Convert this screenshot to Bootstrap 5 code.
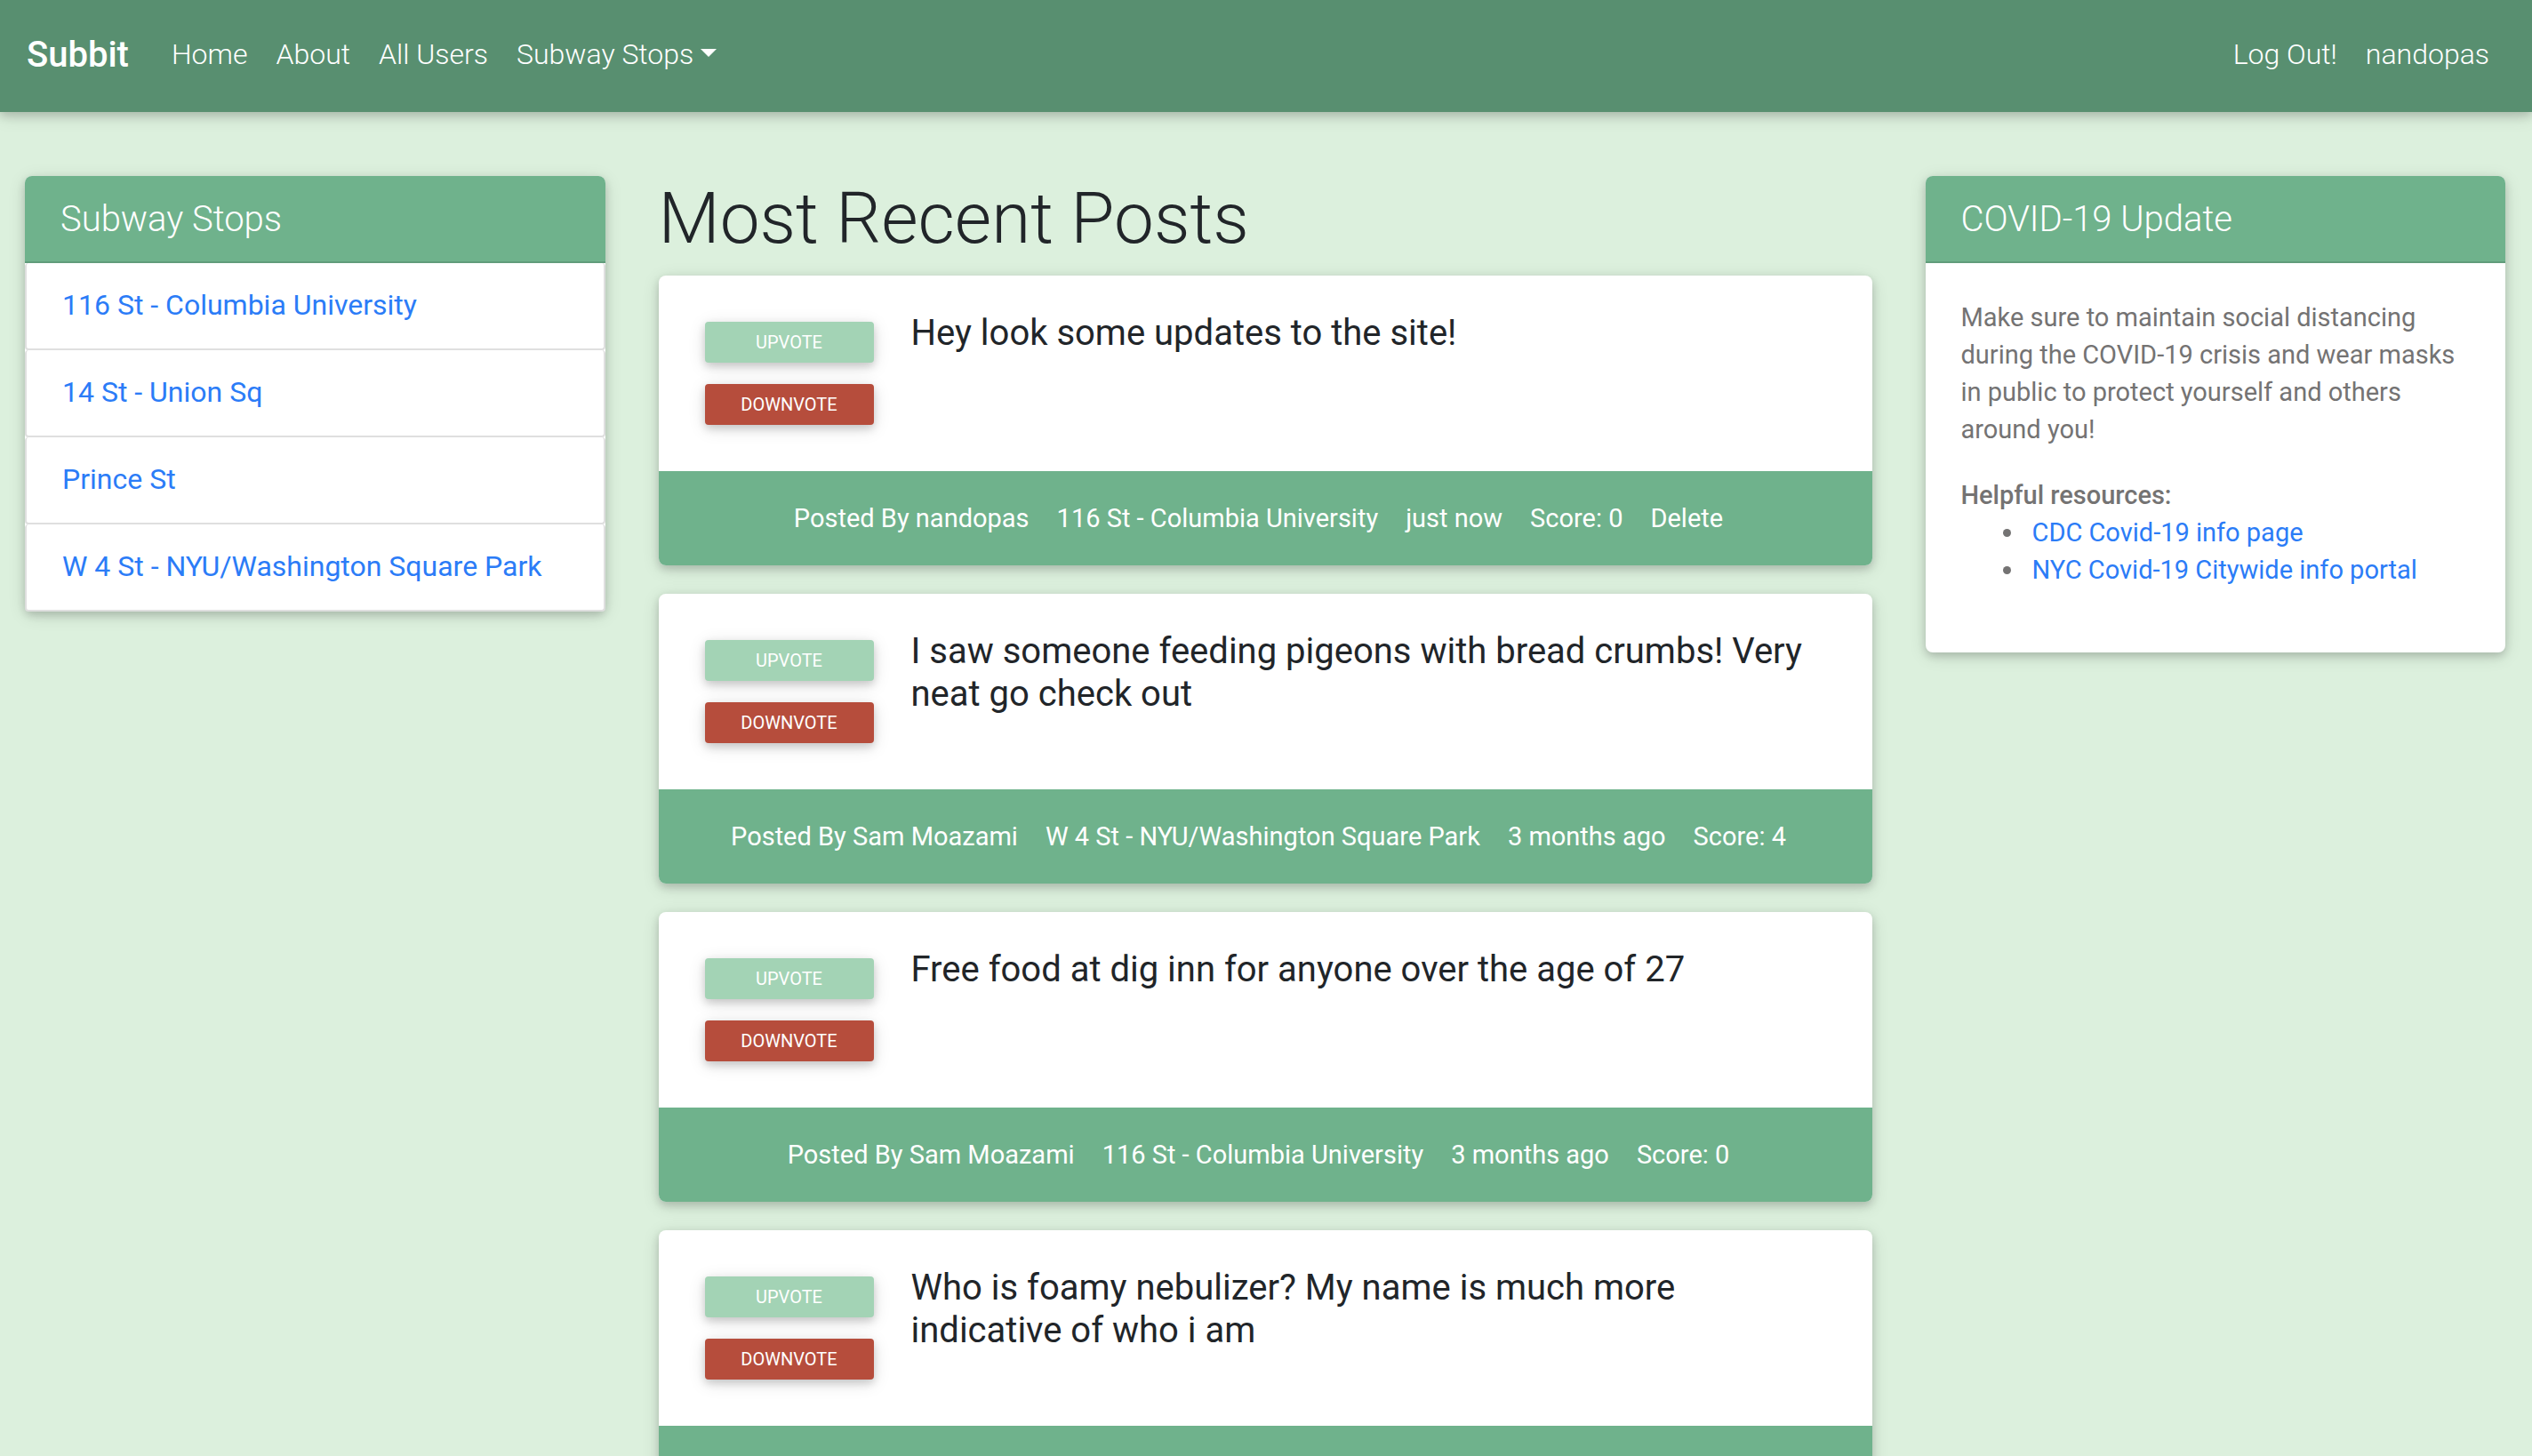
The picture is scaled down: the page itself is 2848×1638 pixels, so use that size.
<!DOCTYPE html>
<html lang="en">
<head>
<meta charset="utf-8">
<meta name="viewport" content="width=device-width, initial-scale=1">
<title>Subbit</title>
<link rel="stylesheet" href="https://cdn.jsdelivr.net/npm/bootstrap@5.3.0/dist/css/bootstrap.min.css">
<style>
  :root { --raise: 0 4px 10px rgba(0,0,0,.16), 0 4px 20px rgba(0,0,0,.12); }
  body { background: #dcf0dd; color: #212529; font-family: Roboto, "Liberation Sans", sans-serif; font-size: 32px; line-height: 48px; }
  a { color: #2b7cf7; text-decoration: none; }

  .site-nav { --bs-navbar-nav-link-padding-x: 16px; background: #588f70; box-shadow: var(--raise); font-weight: 300; padding: 21px 32px 25px 30px; }
  .site-nav .navbar-brand { color: #fff; font-size: 40px; line-height: 60px; font-weight: 500; margin-right: 32px; padding: 11px 0 9px; }
  .site-nav .nav-link { color: #fff; font-size: 32px; line-height: 48px; padding-top: 16px; padding-bottom: 16px; }

  .page-wrap { padding: 72px 30px 0 28px; }
  .page-wrap > .row { --bs-gutter-x: 60px; }

  .panel { --bs-card-border-width: 0; --bs-card-border-radius: 8px; --bs-card-inner-border-radius: 8px; box-shadow: var(--raise); }
  .panel .card-header { background: #6fb28c; color: #fff; border-bottom: 2px solid #619c7b; padding: 25px 40px 23px; }
  .panel .card-header h2 { font-size: 40px; line-height: 48px; font-weight: 300; margin: 0; }
  .panel .card-body { padding: 40px; }

  .stop-list .list-group-item { border: 2px solid #dfdfdf; border-top-width: 0; border-radius: 4px; padding: 23px 40px 25px; }

  .notice { color: #747373; font-size: 29px; line-height: 42px; }
  .notice strong { font-weight: 500; }
  .notice p { margin-bottom: 32px; }
  .notice ul { margin-bottom: 32px; padding-left: 72px; }
  .notice li { padding-left: 8px; }

  .page-title { font-size: 80px; line-height: 96px; font-weight: 300; margin-bottom: 16px; }
  .post { margin-bottom: 32px; }
  .post h2 { font-size: 40px; line-height: 48px; font-weight: 400; margin: 0 24px 0 0; padding-top: 1px; }
  .votes { gap: 24px; padding: 12px; margin-right: 30px; }
  .vote { width: 190px; border: 0; border-radius: 4px; color: #fff; font-size: 20px; line-height: 30px; padding: 8px 0; text-transform: uppercase; box-shadow: var(--raise); }
  .vote:hover { color: #fff; }
  .vote-up, .vote-up:hover { background: #a3d3b5; }
  .vote-down, .vote-down:hover { background: #b64d3c; }
  .post .card-footer { background: #6fb28c; color: #fff; font-size: 29px; line-height: 42px; padding: 32px 40px; }
  .post .card-footer a { color: #fff; }
  .post .card-footer ul { column-gap: 16px; }
  .post .card-footer li { padding-right: 15px; }
</style>
</head>
<body>
<nav class="navbar navbar-expand-lg site-nav">
  <a class="navbar-brand" href="#">Subbit</a>
  <ul class="navbar-nav me-auto">
    <li class="nav-item"><a class="nav-link" href="#">Home</a></li>
    <li class="nav-item"><a class="nav-link" href="#">About</a></li>
    <li class="nav-item"><a class="nav-link" href="#">All Users</a></li>
    <li class="nav-item dropdown"><a class="nav-link dropdown-toggle" href="#" role="button" data-bs-toggle="dropdown" aria-expanded="false">Subway Stops</a>
      <ul class="dropdown-menu">
      </ul>
    </li>
  </ul>
  <ul class="navbar-nav">
    <li class="nav-item"><a class="nav-link" href="#">Log Out!</a></li>
    <li class="nav-item"><a class="nav-link" href="#">nandopas</a></li>
  </ul>
</nav>

<div class="container-fluid page-wrap">
  <div class="row">
    <aside class="col-lg-3">
      <div class="card panel">
        <div class="card-header"><h2>Subway Stops</h2></div>
        <ul class="list-group stop-list">
          <li class="list-group-item"><a href="#">116 St - Columbia University</a></li>
          <li class="list-group-item"><a href="#">14 St - Union Sq</a></li>
          <li class="list-group-item"><a href="#">Prince St</a></li>
          <li class="list-group-item"><a href="#">W 4 St - NYU/Washington Square Park</a></li>
        </ul>
      </div>
    </aside>

    <main class="col-lg-6">
      <h1 class="page-title">Most Recent Posts</h1>

      <article class="card panel post">
        <div class="card-body d-flex align-items-start">
          <div class="votes d-flex flex-column flex-shrink-0">
            <button type="button" class="btn vote vote-up">Upvote</button>
            <button type="button" class="btn vote vote-down">Downvote</button>
          </div>
          <h2>Hey look some updates to the site!</h2>
        </div>
        <div class="card-footer border-0">
          <ul class="list-unstyled d-flex flex-wrap justify-content-center mb-0">
            <li><a href="#">Posted By nandopas</a></li>
            <li><a href="#">116 St - Columbia University</a></li>
            <li>just now</li>
            <li>Score: 0</li>
            <li><a href="#">Delete</a></li>
          </ul>
        </div>
      </article>

      <article class="card panel post">
        <div class="card-body d-flex align-items-start">
          <div class="votes d-flex flex-column flex-shrink-0">
            <button type="button" class="btn vote vote-up">Upvote</button>
            <button type="button" class="btn vote vote-down">Downvote</button>
          </div>
          <h2>I saw someone feeding pigeons with bread crumbs! Very neat go check out</h2>
        </div>
        <div class="card-footer border-0">
          <ul class="list-unstyled d-flex flex-wrap justify-content-center mb-0">
            <li><a href="#">Posted By Sam Moazami</a></li>
            <li><a href="#">W 4 St - NYU/Washington Square Park</a></li>
            <li>3 months ago</li>
            <li>Score: 4</li>
          </ul>
        </div>
      </article>

      <article class="card panel post">
        <div class="card-body d-flex align-items-start">
          <div class="votes d-flex flex-column flex-shrink-0">
            <button type="button" class="btn vote vote-up">Upvote</button>
            <button type="button" class="btn vote vote-down">Downvote</button>
          </div>
          <h2>Free food at dig inn for anyone over the age of 27</h2>
        </div>
        <div class="card-footer border-0">
          <ul class="list-unstyled d-flex flex-wrap justify-content-center mb-0">
            <li><a href="#">Posted By Sam Moazami</a></li>
            <li><a href="#">116 St - Columbia University</a></li>
            <li>3 months ago</li>
            <li>Score: 0</li>
          </ul>
        </div>
      </article>

      <article class="card panel post">
        <div class="card-body d-flex align-items-start">
          <div class="votes d-flex flex-column flex-shrink-0">
            <button type="button" class="btn vote vote-up">Upvote</button>
            <button type="button" class="btn vote vote-down">Downvote</button>
          </div>
          <h2>Who is foamy nebulizer? My name is much more indicative of who i am</h2>
        </div>
        <div class="card-footer border-0">
          <ul class="list-unstyled mb-0"><li>&nbsp;</li></ul>
        </div>
      </article>
    </main>

    <aside class="col-lg-3">
      <div class="card panel">
        <div class="card-header"><h2>COVID-19 Update</h2></div>
        <div class="card-body notice">
          <p>Make sure to maintain social distancing during the COVID-19 crisis and wear masks in public to protect yourself and others around you!</p>
          <strong>Helpful resources:</strong>
          <ul>
            <li><a href="#">CDC Covid-19 info page</a></li>
            <li><a href="#">NYC Covid-19 Citywide info portal</a></li>
          </ul>
        </div>
      </div>
    </aside>
  </div>
</div>
<script src="https://cdn.jsdelivr.net/npm/bootstrap@5.3.0/dist/js/bootstrap.bundle.min.js"></script>
</body>
</html>
